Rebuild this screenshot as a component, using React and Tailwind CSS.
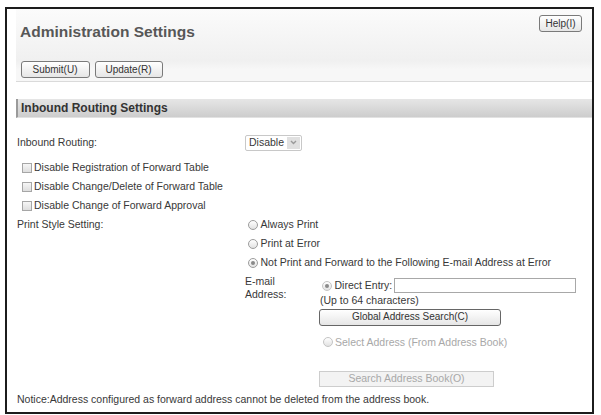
import React from 'react';

const font = { fontFamily: '"Liberation Sans", Arial, Helvetica, sans-serif' };

function Radio({ checked, disabled }) {
  return (
    <span
      className={`flex h-[10px] w-[10px] shrink-0 items-center justify-center rounded-full border bg-gradient-to-b from-white to-[#e2e2e2] ${
        disabled ? 'border-[#c4c4c4]' : 'border-[#9c9c9c]'
      }`}
    >
      {checked && <span className="h-[4px] w-[4px] rounded-full bg-[#8a8a8a]" />}
    </span>
  );
}

function Checkbox() {
  return (
    <span className="block h-[10px] w-[10px] shrink-0 border border-[#a6a6a6] bg-gradient-to-b from-[#f6f6f6] to-[#dedede]" />
  );
}

function Button({ children, className = '' }) {
  return (
    <button
      type="button"
      className={`flex h-[17px] items-center justify-center rounded-[3px] border border-[#7a7a7a] bg-gradient-to-b from-white to-[#e6e6e6] text-[10px] leading-none text-[#333] ${className}`}
    >
      {children}
    </button>
  );
}

export default function App() {
  return (
    <div className="h-[415px] w-[601px] bg-white pl-[5px] pt-[7px] text-[10.5px] text-[#383838]" style={font}>
      <div className="flex h-[407px] w-[589px] flex-col border-2 border-[#1c1c1c] pl-[9px]">
        {/* header */}
        <div className="h-[73px] border-b border-[#dadada] bg-[linear-gradient(to_bottom,#fbfbfb_0%,#f0f0f0_72%,#f7f7f7_84%,#f7f7f7_100%)]">
          <div className="flex items-start justify-between pl-[4px] pr-[10px]">
            <h1 className="mt-[14px] text-[15.5px] font-bold leading-[18px] text-[#575757]">
              Administration Settings
            </h1>
            <Button className="mt-[6px] w-[43px]">Help(I)</Button>
          </div>
          <div className="mt-[20px] flex gap-[5px] pl-[4.5px]">
            <Button className="w-[69px]">Submit(U)</Button>
            <Button className="w-[68px]">Update(R)</Button>
          </div>
        </div>

        {/* section bar */}
        <div className="mt-[17px] flex h-[19px] items-center border-b border-l-2 border-b-[#e2e2e2] border-l-[#9a9a9a] bg-gradient-to-b from-[#e6e6e6] to-[#cdcdcd] pl-[3px]">
          <span className="text-[12px] font-bold text-[#333]">Inbound Routing Settings</span>
        </div>

        <div className="flex flex-col pl-[1px] leading-[13px]">
          <div className="mt-[15px] flex h-[19px] items-center">
            <span className="w-[228px]">Inbound Routing:</span>
            <div className="flex h-[16px] w-[57px] items-center rounded-[2px] border border-[#c8c8c8] bg-white pl-[3px]">
              <span>Disable</span>
              <span className="ml-auto mr-[1px] flex h-[12px] w-[13px] items-center justify-center bg-[#e0e0e0]">
                <svg width="7" height="5" viewBox="0 0 7 5">
                  <path d="M1 1 L3.5 3.5 L6 1" fill="none" stroke="#9a9a9a" strokeWidth="1.4" />
                </svg>
              </span>
            </div>
          </div>

          <div className="mt-[6px] flex flex-col">
            {[
              'Disable Registration of Forward Table',
              'Disable Change/Delete of Forward Table',
              'Disable Change of Forward Approval',
            ].map((t) => (
              <div key={t} className="flex h-[19px] items-center gap-[2.5px] pl-[4.5px]">
                <Checkbox />
                <span>{t}</span>
              </div>
            ))}
          </div>

          <div className="flex">
            <div className="flex h-[19px] w-[228px] items-center">Print Style Setting:</div>
            <div className="flex flex-col">
              <div className="flex h-[19px] items-center gap-[2.5px] pl-[3px]">
                <Radio />
                <span>Always Print</span>
              </div>
              <div className="flex h-[19px] items-center gap-[2.5px] pl-[3px]">
                <Radio />
                <span>Print at Error</span>
              </div>
              <div className="flex h-[19px] items-center gap-[2.5px] pl-[3px]">
                <Radio checked />
                <span>Not Print and Forward to the Following E-mail Address at Error</span>
              </div>

              <div className="flex">
                <div className="w-[74px] pt-[3px]">
                  E-mail
                  <br />
                  Address:
                </div>
                <div className="flex flex-col">
                  <div className="mt-[5.5px] flex h-[16px] items-center pl-[2.5px]">
                    <Radio checked disabled />
                    <span className="ml-[3px]">Direct Entry:</span>
                    <span className="ml-[2px] block h-[15px] w-[182px] border border-[#a8a8a8] bg-white" />
                  </div>
                  <div className="pl-[1px]">(Up to 64 characters)</div>
                  <Button className="mt-[2px] w-[182px] border-[#666] text-[10.5px] from-[#fcfcfc] to-[#dedede]">
                    Global Address Search(C)
                  </Button>
                  <div className="mt-[7px] flex h-[19px] items-center gap-[2.5px] pl-[3.5px] text-[#a8a8a8]">
                    <Radio disabled />
                    <span>Select Address (From Address Book)</span>
                  </div>
                  <button
                    type="button"
                    className="mt-[19px] flex h-[16px] w-[175px] items-center justify-center border border-[#cdcdcd] bg-[#f3f3f3] text-[10.5px] text-[#a8a8a8]"
                  >
                    Search Address Book(O)
                  </button>
                </div>
              </div>
            </div>
          </div>

          <div className="mt-[6px]">
            Notice:Address configured as forward address cannot be deleted from the address book.
          </div>
        </div>
      </div>
    </div>
  );
}
